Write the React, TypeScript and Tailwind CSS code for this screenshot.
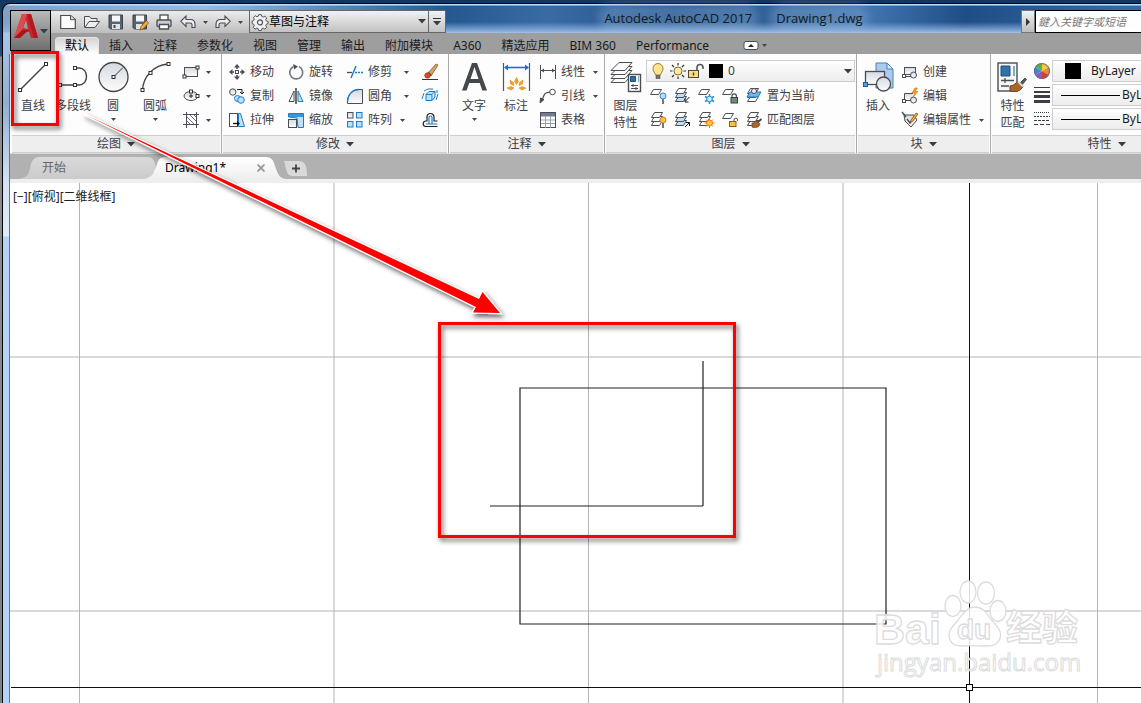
import React from "react";

type IconProps = { name: string; w?: number; h?: number };

const INK = "#4a4d52";
const BLUE = "#1c7cc7";
const SKY = "#bfe0f7";

const sheet = (x: number, y: number, fill = "#fff", key = 0) => (
  <path key={key} d={`M${x + 3.5} ${y + 0.5}h8l-3 5h-8z`} fill={fill} stroke={INK} />
);

const stack = (fill = "#fff") => (
  <g>
    {sheet(1, 8, fill, 1)}
    {sheet(1, 4, fill, 2)}
    {sheet(1, 0, "#fff", 3)}
  </g>
);

const node = (x: number, y: number) => (
  <rect x={x - 1.5} y={y - 1.5} width="3" height="3" fill="#fff" stroke="#333" />
);

const drawings: Record<string, React.ReactNode> = {
  line: (
    <g stroke="#444" fill="none">
      <path d="M2 28L28 2" strokeWidth="1.4" />
      {node(2, 28)}
      {node(28, 2)}
    </g>
  ),
  polyline: (
    <g stroke="#444" fill="none">
      <path d="M17 6h4c10 0 10 17 0 17H1" strokeWidth="1.4" />
      {node(17, 6)}
      {node(17, 23)}
      {node(2, 23)}
    </g>
  ),
  circle: (
    <g>
      <circle cx="15.5" cy="15" r="14.5" fill="url(#steel)" stroke="#444" strokeWidth="1.3" />
      <path d="M15.5 15L25 5.5" stroke="#333" />
      {node(15.5, 15)}
    </g>
  ),
  arc: (
    <g>
      <path d="M2.500 28.500C3 14 14 3 28.500 2" fill="none" stroke="#444" strokeWidth="1.4" />
      {node(2.5, 28)}
      {node(10.5, 11)}
      {node(28.5, 2)}
    </g>
  ),
  rect: (
    <g>
      <rect x="1.500" y="3.500" width="13" height="9" fill="url(#steel)" stroke={INK} />
      {node(14.5, 3.5)}
      {node(1.5, 12.5)}
    </g>
  ),
  ellipse: (
    <g>
      <ellipse cx="8" cy="8" rx="7" ry="4.500" fill="url(#steel)" stroke={INK} />
      <path d="M8 6v4M6 8h4" stroke="#222" />
      {node(14.5, 8)}
      {node(8, 3.5)}
    </g>
  ),
  hatch: (
    <g stroke={INK} fill="none">
      <path d="M3.500 0v16M13.500 0v16M0 2.500h16M0 12.500h16" />
      <path d="M4 5l7 7M4 9l3 3M7 3l6 6M11 3l2 2" strokeWidth=".8" />
    </g>
  ),
  move: (
    <g stroke={INK} fill={INK}>
      <path d="M8 0l3 3.500H5zM8 16l3-3.500H5zM0 8l3.500-3v6zM16 8l-3.500-3v6z" stroke="none" />
      <path d="M8 2v3M8 11v3M2 8h3M11 8h3" strokeWidth="1.600" />
      <rect x="6.500" y="6.500" width="3" height="3" fill="#fff" />
    </g>
  ),
  rotate: (
    <g>
      <path d="M5 2.800A6.500 6.500 0 1 0 11 2.600" fill="none" stroke="#777b80" strokeWidth="1.700" />
      <path d="M5 0l5 2.500L6 5.500z" fill={INK} />
    </g>
  ),
  trim: (
    <g fill="none">
      <path d="M0 8.500h5" stroke={INK} strokeWidth="1.300" />
      <path d="M4 14L9 2" stroke={BLUE} strokeWidth="1.500" />
      <path d="M8 8.500h2M11 8.500h2M14 8.500h2" stroke={BLUE} strokeWidth="1.300" />
    </g>
  ),
  erase: (
    <g>
      <path d="M0 15.500h16" stroke="#333" />
      <path d="M6 9L14 0l2 1-7 11z" fill="#d9a25e" stroke="#7a4a20" strokeWidth=".7" />
      <path d="M6 8.500l3 3" stroke="#555" strokeWidth="2" />
      <circle cx="5.500" cy="11.500" r="2.800" fill="#e0491c" stroke="#7a2a10" strokeWidth=".500" />
    </g>
  ),
  copy: (
    <g>
      <circle cx="3.800" cy="4" r="3.200" fill="url(#steel)" stroke={INK} />
      <path d="M8 1.500h5v4M11 4l2 2 2-2" fill="none" stroke="#222" />
      <circle cx="8.500" cy="10.500" r="3" fill={SKY} stroke={BLUE} />
      <circle cx="12" cy="12" r="3.300" fill={SKY} stroke={BLUE} />
    </g>
  ),
  mirror: (
    <g>
      <path d="M6 3v10.500H1z" fill="#fff" stroke={INK} />
      <path d="M8 0v16" stroke="#222" strokeWidth="1.300" />
      <path d="M10 3v10.500h5z" fill={SKY} stroke={BLUE} />
    </g>
  ),
  fillet: (
    <g>
      <path d="M15.500 1.500v14H.500V13C1 6 6 1.500 12 1.500z" fill="url(#steel)" stroke={INK} />
      <path d="M.500 14C.500 7 5 1.500 12 1.500" fill="none" stroke={BLUE} strokeWidth="1.400" />
    </g>
  ),
  explode: (
    <g fill={SKY} stroke={BLUE}>
      <path d="M4 6.500h6v6H4zM4 6.500l3-3h6l-3 3M13 3.500v5.500l-3 3.500" />
      <path d="M0 11l2-6M2 3l4-2h5M14 12l2-6M15 2v3" fill="none" />
    </g>
  ),
  stretch: (
    <g>
      <rect x=".500" y="1.500" width="8" height="13" fill="#fff" stroke={INK} />
      <path d="M9.500 1.500h2l4 13h-6z" fill={SKY} stroke={BLUE} />
      <path d="M4 11.500h4" stroke="#111" strokeWidth="1.300" />
      <path d="M8 9l3 2.500L8 14z" fill="#111" />
    </g>
  ),
  scale: (
    <g>
      <path d="M.500 5V1.500h15v14H10L9 6z" fill={SKY} stroke={BLUE} />
      <path d="M1 2h14v3H1z" fill="#3b95d6" />
      <rect x=".500" y="7.500" width="8" height="8" fill="url(#steel)" stroke={INK} />
    </g>
  ),
  array: (
    <g>
      <rect x=".500" y=".500" width="5.500" height="5.500" fill="url(#steel)" stroke={INK} />
      <rect x="9.500" y=".500" width="5.500" height="5.500" fill={SKY} stroke={BLUE} />
      <rect x=".500" y="9.500" width="5.500" height="5.500" fill={SKY} stroke={BLUE} />
      <rect x="9.500" y="9.500" width="5.500" height="5.500" fill={SKY} stroke={BLUE} />
    </g>
  ),
  offset: (
    <g fill="none">
      <path d="M15.500 14.500H3.500a2.800 2.800 0 0 1 0-5.500H5V5a3.500 3.500 0 0 1 7 0v4h3.500" stroke="#222" strokeWidth="1.200" />
      <path d="M15.500 12H4M7 11.500V5.500a1.500 1.500 0 0 1 3 0v6" stroke={BLUE} strokeWidth="1.200" />
    </g>
  ),
  text: (
    <path
      fillRule="evenodd"
      d="M3 28.500L13 1h5l10 27.500h-4.700l-2.600-7.500H10.200l-2.600 7.500zM11.500 17h8L15.500 5z"
      fill="#44484d"
    />
  ),
  dimension: (
    <g>
      <path d="M2.500 1v28M28.500 1v28" stroke="#555" strokeWidth="1.200" />
      <path d="M4 5.500h23" stroke="#1a6fe0" strokeWidth="1.600" />
      <path d="M3 5.500l4-3v6zM28 5.500l-4-3v6z" fill="#1a6fe0" />
      <g fill="#f2a21b" stroke="#d98312" strokeWidth=".500">
        <path d="M15.500 15.500l2 4-2 3-2-3z" />
        <path d="M9 18l3.500 2.500.5 3-3.500-1.500zM22 18l-3.500 2.500-.5 3 3.500-1.500z" />
        <path d="M6 26l4-1.500 3 1.500-3 2zM25 26l-4-1.500-3 1.500 3 2z" />
      </g>
    </g>
  ),
  linear: (
    <g stroke={INK} fill={INK}>
      <path d="M.500 1v14M15.500 1v14M1 6.500h14" />
      <path d="M1 6.500L4 4.500v4zM15 6.500l-3-2v4z" stroke="none" />
    </g>
  ),
  leader: (
    <g stroke={INK} fill="none">
      <circle cx="12.500" cy="4" r="2.800" />
      <path d="M10 4.500C5 4 4 6 2 13" strokeWidth="1.200" />
      <path d="M0 15l.500-5 3.500 1.500z" fill={INK} />
    </g>
  ),
  table: (
    <g>
      <rect x=".500" y=".500" width="15" height="15" fill="#fff" stroke={INK} />
      <path d="M1 1h14v3.500H1z" fill="#737b94" />
      <path d="M1 8h14M1 11.500h14M5.500 4v12M10.500 4v12" stroke="#9aa0aa" />
    </g>
  ),
  layers: (
    <g stroke={INK}>
      {[12, 8, 4, 0].map((y) => (
        <path key={y} d={`M9 ${y + 0.5}h13l-7 8H1z`} fill="#fafafa" />
      ))}
      <rect x="18.500" y="12.500" width="12" height="17" fill="#fff" strokeWidth="1.400" />
      <path d="M20.500 14.500h5v5h-5z" fill="#2b6fa8" stroke="#1c4f7c" />
      <path d="M28.500 14v6" stroke="#8ab" />
      <path d="M21 23.500h7M21 26.500h7M23 22v3M26 25v3" />
    </g>
  ),
  insert: (
    <g stroke={INK}>
      <path d="M13 1h11l6 6v19H13z" fill="#a9ccf0" stroke="#4c7fb3" />
      <path d="M24 1v6h6z" fill="#e3f0fc" stroke="#4c7fb3" />
      <rect x="2.500" y="9.500" width="19" height="13" fill="url(#steel)" strokeWidth="1.300" />
      <circle cx="20.500" cy="22" r="7" fill="url(#steel)" strokeWidth="1.300" />
      <rect x=".500" y="20.500" width="4" height="4" fill="#49a1ee" stroke="#1b5fa5" />
    </g>
  ),
  match: (
    <g stroke={INK}>
      <rect x="1" y="1" width="19" height="28" fill="#f6f7f8" strokeWidth="1.400" />
      <path d="M4 4h9v10H4z" fill="#2f73ad" stroke="#1c4f7c" />
      <path d="M17 4v10" stroke="#8ab" strokeWidth="2" />
      <path d="M4 18.500h13M4 24h8M8 16v5" strokeWidth="1.300" />
      <path d="M22 22l6-6 1.500 1.500-5 6z" fill="#555" />
      <path d="M13 24c5 0 5-4 9-4l4 4c-2 6-9 6-13 5z" fill="#a8672b" stroke="#6f3d14" />
      <path d="M21 19.500l5 5" stroke="#d8d8d8" strokeWidth="2" />
    </g>
  ),
  create: (
    <g stroke={INK}>
      <rect x="2.500" y="3.500" width="11" height="7" fill="url(#steel)" />
      <circle cx="11.500" cy="11" r="3" fill="url(#steel)" />
      <rect x=".500" y="10.500" width="3" height="3" fill="#fff" />
      <path d="M4 12.500h5" />
    </g>
  ),
  edit: (
    <g stroke={INK}>
      <path d="M11 5.500H2.500v7H9" fill="url(#steel)" />
      <circle cx="11.500" cy="12" r="3" fill="url(#steel)" />
      <rect x=".500" y="11.500" width="3" height="3" fill="#fff" />
      <path d="M13 0l-3 5h3l-2 4 5-5.500h-3L15.500 0z" fill="#f9a01b" stroke="#d2700a" strokeWidth=".600" />
    </g>
  ),
  attribute: (
    <g stroke={INK}>
      <path d="M2 3h10l3 5-6 7-6-6z" fill="url(#steel)" />
      <path d="M0 0l4 5M5 7l3 4 5-7" fill="none" strokeWidth="1.400" />
      <path d="M9 8l5-7 2 1-5 7-2.500 1.500z" fill="#f3a536" stroke="#8b4a12" strokeWidth=".700" />
    </g>
  ),
  wheel: (
    <g>
      <path d="M8 8V0a8 8 0 0 1 7 4z" fill="#f5c93c" />
      <path d="M8 8l7-4a8 8 0 0 1 0 8z" fill="#e8902c" />
      <path d="M8 8l7 4a8 8 0 0 1-7 4z" fill="#d24237" />
      <path d="M8 8v8a8 8 0 0 1-7-4z" fill="#8b5bc0" />
      <path d="M8 8l-7 4a8 8 0 0 1 0-8z" fill="#4286d8" />
      <path d="M8 8L1 4a8 8 0 0 1 7-4z" fill="#58b14c" />
      <circle cx="8" cy="8" r="7.400" fill="none" stroke="#6b6f75" />
    </g>
  ),
  weights: <path d="M0 0h16v1H0zM0 4h16v2H0zM0 8h16v3H0zM0 13h16v3H0z" fill="#3b3e44" />,
  types: (
    <g stroke="#3b3e44" fill="none">
      <path d="M0 1.500h16" strokeDasharray="1 1" />
      <path d="M0 5.500h16" strokeDasharray="2 1" />
      <path d="M0 9.500h16" strokeDasharray="3 1" />
      <path d="M0 13.500h16" strokeDasharray="4 2" />
    </g>
  ),
  bulb: (
    <g>
      <path d="M8 .500a5 5 0 0 0-5 5c0 3 2 4 2.500 6.500h5C11 9.500 13 8.500 13 5.500a5 5 0 0 0-5-5z" fill="#ffe391" stroke="#9b7a33" />
      <path d="M6 12.500h4v3H6z" fill="#777" stroke="#444" strokeWidth=".600" />
    </g>
  ),
  sun: (
    <g>
      <path d="M8 0v2.500M8 13.500V16M0 8h2.500M13.500 8H16M2 2l2 2M12 12l2 2M2 14l2-2M12 4l2-2" stroke="#333" strokeWidth="1.200" />
      <circle cx="8" cy="8" r="4" fill="#ffe8a5" stroke="#86692f" />
    </g>
  ),
  unlock: (
    <g>
      <rect x=".500" y="7.500" width="10" height="7" fill="#f6dd8b" stroke="#54482c" />
      <path d="M9 7.500V4.500a3 3 0 0 1 6 0v1.500" fill="none" stroke="#555" strokeWidth="1.600" />
      <path d="M5.500 9.500v3" stroke="#333" strokeWidth="1.300" />
    </g>
  ),
  layerOff: (
    <g>
      {sheet(0, 1)}
      <circle cx="13" cy="8" r="3" fill="#b9dcfa" stroke="#3a83c4" />
      <path d="M12 11h2v5h-2z" fill="#777" />
    </g>
  ),
  layerIso: (
    <g>
      {stack(SKY)}
      <path d="M15.500 9l-4 4M11 10.500V14h3.500" stroke="#111" fill="none" />
    </g>
  ),
  layerFreeze: (
    <g>
      {sheet(0, 1)}
      <path d="M11.500 6v10M7 8.500l9 5M16 8.500l-9 5" stroke="#268dd0" strokeWidth="1.600" />
      <circle cx="11.500" cy="11" r="2.800" fill="#cce9fb" stroke="#268dd0" />
    </g>
  ),
  layerLock: (
    <g>
      {sheet(0, 1)}
      <path d="M10 9.500V8a2.200 2.200 0 0 1 4.400 0v1.500" fill="none" stroke={INK} strokeWidth="1.200" />
      <rect x="9" y="9.500" width="6.500" height="5.500" fill="#6f8a80" stroke="#34443e" />
    </g>
  ),
  layerCurrent: (
    <g>
      {stack("#fff")}
      <path d="M4 4h11l-3 5H1z" fill="#71b5ea" stroke={BLUE} />
      <circle cx="8" cy="3" r="2.500" fill="#eee" stroke={INK} />
    </g>
  ),
  layerOn: (
    <g>
      {stack()}
      <circle cx="13" cy="8" r="3" fill="#ffc34d" stroke="#d0801b" />
      <path d="M12 11h2v5h-2z" fill="#777" />
    </g>
  ),
  layerUniso: (
    <g>
      {stack(SKY)}
      <path d="M11 15l4-4M12 10.500h3.500V14" stroke="#111" fill="none" />
    </g>
  ),
  layerThaw: (
    <g>
      {stack()}
      <path d="M11.500 6v10M6.500 11h10M8 7.500l7 7M15 7.500l-7 7" stroke="#ef7d17" />
      <circle cx="11.500" cy="11" r="3" fill="#ffc83d" stroke="#ef7d17" />
    </g>
  ),
  layerUnlock: (
    <g>
      {sheet(0, 1)}
      <path d="M12 9.500V8a1.800 1.800 0 0 1 3.600 0v1" fill="none" stroke={INK} />
      <rect x="7.500" y="9.500" width="6.500" height="5" fill="#f2c450" stroke="#8a5b12" />
    </g>
  ),
  layerMatch: (
    <g>
      {stack()}
      <path d="M6 11c3 0 3-2 5-2l3 3c-1 4-5 4-8 3z" fill="#a8672b" stroke="#6f3d14" strokeWidth=".700" />
      <path d="M12 10l3.500-3" stroke="#444" strokeWidth="1.800" />
    </g>
  ),
  new: (
    <g>
      <path d="M.700 1.500h10l4.600 4v9H.700z" fill="#fdfdfd" stroke={INK} strokeWidth="1.200" />
      <path d="M10.500 1.500v4.200h4.800" fill="#ddd" stroke={INK} />
    </g>
  ),
  open: (
    <g stroke={INK} fill="#eceff2">
      <path d="M.500 13.500v-11h5l1.500 2h6v3" />
      <path d="M1 13.500l4-6h10.500l-4.500 6z" />
    </g>
  ),
  save: (
    <g>
      <path d="M1 1h13.500v14H2.500L1 13.500z" fill="#59626d" stroke="#3a424c" />
      <rect x="4" y="1.500" width="8" height="6" fill="#f5f7f9" />
      <path d="M4 10h8v5H4z" fill="#dfe3e8" />
      <path d="M5.500 11h2v3h-2z" fill="#414850" />
    </g>
  ),
  saveAs: (
    <g>
      <path d="M1 1h13.500v14H2.500L1 13.500z" fill="#59626d" stroke="#3a424c" />
      <rect x="4" y="1.500" width="8" height="6" fill="#f5f7f9" />
      <path d="M4 10h6v5H4z" fill="#dfe3e8" />
      <path d="M8 16l1-3.500L14.500 6.500 16.500 9 11 15z" fill="#f7ae38" stroke="#8c4b13" strokeWidth=".800" />
    </g>
  ),
  print: (
    <g stroke={INK} strokeWidth="1.300">
      <rect x="4" y="1" width="8" height="6" fill="#fff" />
      <rect x="1" y="6" width="14" height="6.500" rx="1" fill="#c7ccd2" />
      <path d="M3.500 10.500h9v4.500h-9z" fill="#fff" />
    </g>
  ),
  undo: <path d="M6 2v3.500h4.500c3 0 4.500 1.500 4.500 5v3h-3v-3c0-1-.500-1.500-2-1.500H6v3.500L.800 7.300z" fill="#e9eef3" stroke={INK} strokeWidth="1.100" />,
  redo: <path d="M10 2v3.500H5.500C2.500 5.500 1 7 1 10.500v3h3v-3C4 9.500 4.500 9 6 9h4v3.500l5.200-5.200z" fill="#e9eef3" stroke={INK} strokeWidth="1.100" />,
  gear: (
    <g fill="#f1f2f3" stroke="#50545a">
      <path d="M6.700.700h2.600l.500 1.800 1.400.6 1.700-1 1.800 1.800-1 1.700.6 1.400 1.800.5v2.200l-1.800.5-.6 1.400 1 1.700-1.800 1.800-1.700-1-1.400.6-.5 1.800H6.700l-.5-1.800-1.400-.6-1.700 1-1.800-1.800 1-1.700-.6-1.400L.200 9.700V7l1.700-.8.5-1-1-1.700 1.800-1.800 1.700 1 1.300-.4z" />
      <circle cx="8" cy="8.400" r="2.500" strokeWidth="1.200" />
    </g>
  ),
};

function Icon({ name, w = 16, h = 16 }: IconProps) {
  return (
    <svg width={w} height={h} viewBox={`0 0 ${w} ${h}`} className="shrink-0 overflow-visible" aria-hidden="true">
      {drawings[name]}
    </svg>
  );
}

function Caret({ big = false }: { big?: boolean }) {
  return big ? (
    <svg width="8" height="5" viewBox="0 0 8 5" className="shrink-0" aria-hidden="true">
      <path d="M0 0h8L4 4.500z" fill="#3a3d42" />
    </svg>
  ) : (
    <svg width="5" height="3" viewBox="0 0 5 3" className="shrink-0" aria-hidden="true">
      <path d="M0 0h5L2.500 3z" fill="#44474c" />
    </svg>
  );
}

function Big({ icon, label, caret, width }: { icon: string; label: string[]; caret?: boolean; width: string }) {
  return (
    <button type="button" className={`flex shrink-0 flex-col items-center pt-2 ${width}`}>
      <Icon name={icon} w={31} h={31} />
      <span className="mt-1 leading-[17px] whitespace-nowrap">
        {label.map((t) => (
          <span key={t} className="block">
            {t}
          </span>
        ))}
      </span>
      {caret && (
        <span className="mt-1">
          <Caret />
        </span>
      )}
    </button>
  );
}

function Small({ icon, label, caret, gap = "ml-3" }: { icon: string; label?: string; caret?: boolean; gap?: string }) {
  return (
    <div className="flex h-6 items-center">
      <button type="button" aria-label={label ?? icon} className="flex items-center gap-[5px] whitespace-nowrap">
        <Icon name={icon} />
        {label && <span>{label}</span>}
      </button>
      {caret && (
        <button type="button" aria-label="更多" className={gap}>
          <Caret />
        </button>
      )}
    </div>
  );
}

function Panel({ title, width, children }: { title: string; width: string; children: React.ReactNode }) {
  return (
    <section className={`flex shrink-0 flex-col border-r border-[#a9a9a9] ${width}`}>
      <div className="flex h-[81px] overflow-hidden">{children}</div>
      <button
        type="button"
        className="mx-px flex h-[18px] items-center justify-center gap-[6px] border-y border-[#cfcfcf] bg-[#eeeeee]"
      >
        {title}
        <Caret big />
      </button>
    </section>
  );
}

const tabs = ["默认", "插入", "注释", "参数化", "视图", "管理", "输出", "附加模块", "A360", "精选应用", "BIM 360", "Performance"];

function Header() {
  return (
    <header className="flex shrink-0 pl-[7px]">
      <button
        type="button"
        aria-label="应用程序菜单"
        className="mt-[5px] flex h-[41px] w-[41px] shrink-0 justify-center gap-px border border-black bg-linear-to-b from-[#b9b9b9] to-[#6f6f6f] pt-[2px]"
      >
        <svg width="26" height="27" viewBox="0 0 26 27" className="shrink-0" aria-hidden="true">
          <path fillRule="evenodd" d="M9 1h9l7 24h-7l-2-6-6-1-3 7H1zM13 7l-3 8 5 1z" fill="#c9262b" />
          <path d="M9 1h5L7 25H1z" fill="#dd4b50" />
          <path d="M1 25l8-8 7 0-9 8z" fill="#a5161d" />
          <path d="M18 1l7 24h-4L14 1z" fill="#b01a20" />
        </svg>
        <span className="pt-4">
          <Caret big />
        </span>
      </button>
      <div className="flex min-w-0 flex-1 flex-col">
        <div className="flex h-7 items-stretch pt-[5px]">
          <div className="flex w-[198px] shrink-0 items-center gap-2 border-t border-[#777] bg-linear-to-b from-[#ececec] to-[#bdbdbd] pl-[9px]">
            {["new", "open", "save", "saveAs", "print"].map((n) => (
              <button key={n} type="button" aria-label={n}>
                <Icon name={n} />
              </button>
            ))}
            <div className="flex items-center gap-[7px]">
              <button type="button" aria-label="undo">
                <Icon name="undo" />
              </button>
              <Caret />
              <button type="button" aria-label="redo">
                <Icon name="redo" />
              </button>
              <Caret />
            </div>
          </div>
          <div className="relative flex w-[180px] shrink-0 items-center border border-[#666] bg-linear-to-b from-[#f2f2f2] to-[#c2c2c2] pl-[2px]">
            <Icon name="gear" />
            <select aria-label="工作空间" className="h-full min-w-0 flex-1 appearance-none pl-[1px] text-black outline-none">
              <option>草图与注释</option>
            </select>
            <span className="pointer-events-none absolute right-[2px]">
              <Caret big />
            </span>
          </div>
          <button
            type="button"
            aria-label="自定义快速访问工具栏"
            className="flex w-[17px] shrink-0 flex-col items-center justify-center gap-[2px] border-y border-r border-[#666] bg-linear-to-b from-[#f2f2f2] to-[#c2c2c2]"
          >
            <span className="h-px w-2 bg-[#333]" />
            <Caret big />
          </button>
          <h1 className="flex min-w-0 flex-1 justify-center gap-6 font-['Open_Sans'] text-[13px] leading-[16px] whitespace-nowrap text-[#101820]">
            <span>
              <span className="rounded-full bg-[#9dbfe6]/30 shadow-[0_0_8px_6px_rgba(157,191,230,0.300)]">Autodesk AutoCAD 2017</span>
            </span>
            <span>
              <span className="rounded-full bg-[#9dbfe6]/30 shadow-[0_0_8px_6px_rgba(157,191,230,0.300)]">Drawing1.dwg</span>
            </span>
          </h1>
          <button
            type="button"
            aria-label="搜索"
            className="flex w-[14px] shrink-0 items-center justify-center border border-[#777] bg-linear-to-b from-[#f2f2f2] to-[#bdbdbd]"
          >
            <svg width="4" height="8" viewBox="0 0 4 8" aria-hidden="true">
              <path d="M0 0v8l4-4z" fill="#333" />
            </svg>
          </button>
          <input
            aria-label="搜索"
            placeholder="鍵入关键字或短语"
            className="w-[106px] shrink-0 border border-r-0 border-black bg-white px-[2px] text-[11px] italic outline-none placeholder:text-[#777]"
          />
        </div>
        <nav className="flex h-[21px] items-end bg-[#9e9e9e] pl-1">
          {tabs.map((t, i) => (
            <button
              key={t}
              type="button"
              className={
                i === 0
                  ? "h-[17px] shrink-0 rounded-t-sm border border-b-0 border-[#e5e5e5] bg-linear-to-b from-[#d4d4d4] to-white px-[9px] leading-[16px] whitespace-nowrap text-black"
                  : "h-[17px] shrink-0 px-[10px] leading-[17px] whitespace-nowrap text-[#1b1b1b]"
              }
            >
              {t}
            </button>
          ))}
          <button type="button" aria-label="最小化功能区" className="ml-6 flex h-[17px] items-center gap-[3px]">
            <svg width="16" height="9" viewBox="0 0 16 9" aria-hidden="true">
              <rect x="1" y=".500" width="14" height="8" rx="2" fill="#fff" stroke="#44505c" />
              <path d="M5 6h6L8 3z" fill="#222" />
            </svg>
            <Caret />
          </button>
        </nav>
      </div>
    </header>
  );
}

function Ribbon() {
  return (
    <div className="flex shrink-0 overflow-hidden border-b border-[#d8d8d8] bg-[#fdfdfd] pl-px">
      <Panel title="绘图" width="w-[211px]">
        <div className="flex pl-[2px]">
          <Big icon="line" label={["直线"]} width="w-10" />
          <Big icon="polyline" label={["多段线"]} width="w-10" />
          <Big icon="circle" label={["圆"]} caret width="w-10" />
          <Big icon="arc" label={["圆弧"]} caret width="w-11" />
        </div>
        <div className="pt-[6px] pl-[6px]">
          <Small icon="rect" caret gap="ml-[7px]" />
          <Small icon="ellipse" caret gap="ml-[7px]" />
          <Small icon="hatch" caret gap="ml-[7px]" />
        </div>
      </Panel>
      <Panel title="修改" width="w-[227px]">
        <div className="grid grid-cols-[59px_59px_75px_auto] content-start pt-[6px] pl-[7px]">
          <Small icon="move" label="移动" />
          <Small icon="rotate" label="旋转" />
          <Small icon="trim" label="修剪" caret />
          <Small icon="erase" />
          <Small icon="copy" label="复制" />
          <Small icon="mirror" label="镜像" />
          <Small icon="fillet" label="圆角" caret />
          <Small icon="explode" />
          <Small icon="stretch" label="拉伸" />
          <Small icon="scale" label="缩放" />
          <Small icon="array" label="阵列" caret gap="ml-2" />
          <Small icon="offset" />
        </div>
      </Panel>
      <Panel title="注释" width="w-[156px]">
        <div className="flex pl-[4px]">
          <Big icon="text" label={["文字"]} caret width="w-[42px]" />
          <Big icon="dimension" label={["标注"]} width="w-[42px]" />
        </div>
        <div className="pt-[6px] pl-[3px]">
          <Small icon="linear" label="线性" caret gap="ml-2" />
          <Small icon="leader" label="引线" caret gap="ml-2" />
          <Small icon="table" label="表格" />
        </div>
      </Panel>
      <Panel title="图层" width="w-[252px]">
        <Big icon="layers" label={["图层", "特性"]} width="w-[41px]" />
        <div className="pt-[6px]">
          <div className="flex h-[22px] w-[209px] items-center border border-[#cfcfcf] bg-linear-to-b from-white to-[#ececec] pr-[2px] pl-[3px]">
            <Icon name="bulb" />
            <span className="w-1" />
            <Icon name="sun" />
            <span className="w-[2px]" />
            <Icon name="unlock" />
            <span className="ml-[5px] h-[14px] w-[14px] bg-black" />
            <span className="ml-[5px] flex-1">0</span>
            <Caret big />
          </div>
          <div className="flex gap-2 pt-[2px] pl-1">
            <Small icon="layerOff" />
            <Small icon="layerIso" />
            <Small icon="layerFreeze" />
            <Small icon="layerLock" />
            <Small icon="layerCurrent" label="置为当前" />
          </div>
          <div className="flex gap-2 pl-1">
            <Small icon="layerOn" />
            <Small icon="layerUniso" />
            <Small icon="layerThaw" />
            <Small icon="layerUnlock" />
            <Small icon="layerMatch" label="匹配图层" />
          </div>
        </div>
      </Panel>
      <Panel title="块" width="w-[134px]">
        <Big icon="insert" label={["插入"]} width="w-[42px]" />
        <div className="pt-[6px] pl-[3px]">
          <Small icon="create" label="创建" />
          <Small icon="edit" label="编辑" />
          <Small icon="attribute" label="编辑属性" caret gap="ml-2" />
        </div>
      </Panel>
      <Panel title="特性" width="w-[232px]">
        <Big icon="match" label={["特性", "匹配"]} width="w-[43px]" />
        <div className="grid grid-cols-[18px_180px] content-start gap-y-[2px] pt-[6px] text-[#1b1b1b]">
          <span className="flex items-center">
            <Icon name="wheel" />
          </span>
          <div className="flex h-[22px] items-center border border-[#cfcfcf] bg-linear-to-b from-white to-[#ececec] pl-3">
            <span className="h-4 w-4 bg-black" />
            <span className="pl-[10px]">ByLayer</span>
          </div>
          {["weights", "types"].map((n) => (
            <React.Fragment key={n}>
              <span className="flex items-center">
                <Icon name={n} />
              </span>
              <div className="flex h-[22px] items-center border border-[#cfcfcf] bg-linear-to-b from-white to-[#ececec] pl-2">
                <span className="h-px w-[59px] bg-black" />
                <span className="pl-[2px]">ByLayer</span>
              </div>
            </React.Fragment>
          ))}
        </div>
      </Panel>
    </div>
  );
}

function FileTabs() {
  return (
    <div className="shrink-0 border-b-4 border-[#eeeeee] bg-[#b1b1b1]">
      <div className="flex h-[25px] items-end">
        <button type="button" className="relative h-[23px] w-[145px] text-left text-[#666]">
          <svg width="145" height="23" viewBox="0 0 145 23" className="absolute inset-0 overflow-visible" aria-hidden="true">
            <path d="M8 23C19 22 19 16 21 8 23 2 26 1 31 1h106c8 0 9 8 9 14L139 23z" fill="url(#tabGrey)" />
          </svg>
          <span className="relative pl-8">开始</span>
        </button>
        <div className="relative flex h-[23px] w-[128px] items-center pl-[10px] text-black">
          <svg width="130" height="23" viewBox="0 0 130 23" className="absolute inset-0 overflow-visible" aria-hidden="true">
            <path d="M-12 23C-2 22-1 16 2 8 4 2 6 1 11 1h99c7 0 8 3 10 9 3 9 5 13 12 13z" fill="url(#tabWhite)" />
          </svg>
          <button type="button" className="relative flex-1 text-left">
            Drawing1*
          </button>
          <button type="button" aria-label="关闭" className="relative mr-[18px]">
            <svg width="8" height="8" viewBox="0 0 8 8" aria-hidden="true">
              <path d="M.500.500l7 7M7.500.500l-7 7" stroke="#999" strokeWidth="1.800" />
            </svg>
          </button>
        </div>
        <button type="button" aria-label="新图形" className="mb-[3px] ml-px">
          <svg width="24" height="15" viewBox="0 0 24 15" aria-hidden="true">
            <path d="M0 0h15c6 0 8 5 8 15H8C2 15 2 6 0 0z" fill="#d9d9d9" />
            <path d="M12 3.500v8M8 7.500h8" stroke="#444" strokeWidth="1.800" />
          </svg>
        </button>
      </div>
    </div>
  );
}

function Watermark() {
  return (
    <g fill="#ffffff" fillOpacity=".850" stroke="#dcdcdc" strokeWidth="1.300">
      <ellipse cx="953" cy="606" rx="8" ry="10.500" />
      <ellipse cx="968" cy="592" rx="8" ry="11" />
      <ellipse cx="986" cy="593" rx="8.500" ry="11" />
      <ellipse cx="998" cy="611" rx="8" ry="10.500" />
      <path d="M975 607c10 0 13 10 20 17 10 10 6 22-8 22-8 0-17-1-25 0-14 0-16-12-9-20 7-7 12-19 22-19z" />
      <text x="874" y="644" fontSize="43" fontWeight="700" className="font-['Liberation_Sans']">
        Bai
      </text>
      <text x="957" y="639" fontSize="28" fontWeight="700" className="font-['Liberation_Sans']">
        du
      </text>
      <text x="1006" y="641" fontSize="36" fontWeight="700" className="font-['Noto_Sans_CJK_SC']">
        经验
      </text>
      <text x="877" y="671" fontSize="24" strokeWidth="1" className="font-['Open_Sans']">
        jingyan.baidu.com
      </text>
    </g>
  );
}

function Canvas() {
  return (
    <main className="relative min-h-0 flex-1 overflow-hidden bg-white">
      <svg width="100%" height="100%" className="block" aria-hidden="true">
        <g transform="translate(-10 -183)" fill="none">
          <path d="M79.500 183V1400M334 183V1400M588.500 183V1400M843 183V1400M1097.500 183V1400M10 357H2400M10 611H2400" stroke="#b4b4ba" />
          <path d="M520 388h366v236H520zM703 361v145M490 506h213" stroke="#222" strokeWidth="1.200" />
          <path d="M969.500 183V1400M11 687.500H2400" stroke="#111" />
          <rect x="966.500" y="684.500" width="6" height="6" fill="#fff" stroke="#000" />
        </g>
        <g transform="translate(-10 -183)">
          <Watermark />
        </g>
      </svg>
      <p className="absolute top-[6px] left-[3px] leading-4 text-[#222]">[−][俯视][二维线框]</p>
    </main>
  );
}

function Markup() {
  return (
    <svg className="pointer-events-none absolute inset-0 h-full w-full" aria-hidden="true">
      <defs>
        <filter id="drop" x="-10%" y="-10%" width="120%" height="120%">
          <feDropShadow dx="2" dy="3" stdDeviation="2.500" floodColor="#000" floodOpacity=".600" />
        </filter>
      </defs>
      <g filter="url(#drop)">
        <rect x="12.500" y="52.500" width="45" height="72" fill="none" stroke="#fe0000" strokeWidth="3" />
        <rect x="439.500" y="323.500" width="295" height="213" fill="none" stroke="#fe0000" strokeWidth="3" />
        <path d="M84 114L479 299 482.500 292 500 313 473 312.500 476 307z" fill="#fe0000" stroke="#fff" strokeWidth="2.400" paintOrder="stroke" />
      </g>
    </svg>
  );
}

export default function App() {
  return (
    <div className="relative flex h-screen w-full flex-col overflow-hidden bg-[linear-gradient(to_bottom,#12365f_0px,#234f86_56px,#8b8f95_57px,#7d8288_100%)] font-['Noto_Sans','Noto_Sans_CJK_SC',sans-serif] text-[12px] leading-4 text-[#3d4045]">
      <svg width="0" height="0" className="absolute" aria-hidden="true">
        <defs>
          <linearGradient id="steel" x1="0" y1="0" x2="0" y2="1">
            <stop offset="0" stopColor="#d5dae0" />
            <stop offset="1" stopColor="#fbfcfd" />
          </linearGradient>
          <linearGradient id="tabGrey" x1="0" y1="0" x2="0" y2="1">
            <stop offset="0" stopColor="#d9d9d9" />
            <stop offset="1" stopColor="#cbcbcb" />
          </linearGradient>
          <linearGradient id="tabWhite" x1="0" y1="0" x2="0" y2="1">
            <stop offset="0" stopColor="#ffffff" />
            <stop offset="1" stopColor="#eeeeee" />
          </linearGradient>
        </defs>
      </svg>
      <div className="mt-[3px] ml-[2px] flex min-h-0 flex-1 flex-col rounded-tl-lg border-t border-l border-black bg-[linear-gradient(to_bottom,#c6dcf3_0px,#c6dcf3_1px,transparent_2px,transparent_18px,#8fb4e0_28px,#a9c6e8_29px,#8fb0d6_100px,#d3e3f4_180px,#e0ecf8_232px,#b3d3fa_233px,#b3d3fa_100%),linear-gradient(100deg,#7f9fc4_0px,#9db9da_200px,#24588f_440px,#3a6ba5_540px,#235089_660px,#336299_760px,#3f72ae_860px,#1f4e86_950px,#3567a2_1100px)] pt-px">
        <Header />
        <div className="ml-[6px] flex min-h-0 flex-1 flex-col border-l border-[#5a7390]">
          <Ribbon />
          <FileTabs />
          <Canvas />
        </div>
      </div>
      <Markup />
    </div>
  );
}
